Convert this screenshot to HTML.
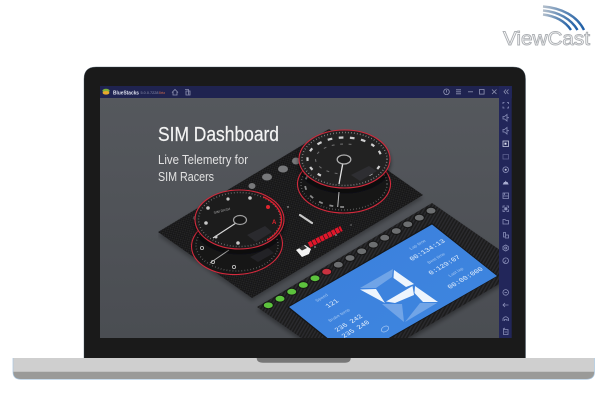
<!DOCTYPE html>
<html><head><meta charset="utf-8"><style>
html,body{margin:0;padding:0;background:#fff;width:602px;height:414px;overflow:hidden}
svg{display:block;position:absolute;left:0;top:0}
text{font-family:"Liberation Sans",sans-serif}
</style></head><body>
<svg width="602" height="414" viewBox="0 0 602 414" xmlns="http://www.w3.org/2000/svg">
<defs>
<linearGradient id="bg" x1="0" y1="0" x2="0" y2="1"><stop offset="0" stop-color="#55585d"/><stop offset="1" stop-color="#4a4d52"/></linearGradient>
<linearGradient id="arc" x1="0" y1="0" x2="1" y2="0"><stop offset="0" stop-color="#b5c0cc"/><stop offset=".55" stop-color="#5d87b5"/><stop offset="1" stop-color="#1e5ea6"/></linearGradient>
<linearGradient id="blue" x1="0" y1="0" x2="1" y2="1"><stop offset="0" stop-color="#3a80dc"/><stop offset="1" stop-color="#3f86e0"/></linearGradient>
<pattern id="carbon" width="3" height="3" patternUnits="userSpaceOnUse" patternTransform="rotate(-30)"><rect width="3" height="3" fill="#161617"/><rect width="1.5" height="1.5" fill="#262628"/><rect x="1.5" y="1.5" width="1.5" height="1.5" fill="#202022"/></pattern>
<pattern id="stripe" width="3" height="3" patternUnits="userSpaceOnUse" patternTransform="rotate(30)"><rect width="3" height="3" fill="#1c1c1e"/><rect width="1.4" height="3" fill="#2c2c2e"/></pattern>
<clipPath id="content"><rect x="100" y="98" width="399" height="240"/></clipPath>
<filter id="blur" x="-30%" y="-30%" width="160%" height="160%"><feGaussianBlur stdDeviation="2"/></filter>
<filter id="soft" x="0" y="0" width="100%" height="100%"><feGaussianBlur stdDeviation=".35"/></filter>
</defs>

<!-- ViewCast logo -->
<g fill="none" stroke="url(#arc)" stroke-width="2.400">
<path d="M543 6.500C562 8 577 16 584 30"/>
<path d="M543 10.500C559 12 571 19 577.500 30"/>
<path d="M543 14.500C555 16 565 21 571 30"/>
</g>
<text x="503" y="45" font-size="19" fill="#fff" stroke="#aeb1b5" stroke-width=".9" textLength="87" lengthAdjust="spacingAndGlyphs">ViewCast</text>

<!-- laptop body -->
<path d="M84 358V79Q84 67 96 67H513Q525.500 67 525.500 79V358Z" fill="#1a1a1a"/>
<path d="M84 358V79Q84 67 96 67H513Q525.500 67 525.500 79V358" fill="none" stroke="#3a5060" stroke-width=".5" opacity=".7"/>

<!-- base -->
<path d="M13 358H594.500V372Q594.500 379.300 586 379.300H21Q13 379.300 13 372Z" fill="#cfcfcf"/>
<path d="M13 371.700H594.500V372Q594.500 379.300 586 379.300H21Q13 379.300 13 372Z" fill="#9a9a98"/>
<path d="M13 358V372Q13 379.300 21 379.300H586Q594.500 379.300 594.500 372V358" fill="none" stroke="#a9c6e0" stroke-width=".7"/>
<path d="M256.700 358H350.700Q350.700 362.700 345 362.700H263Q256.700 362.700 256.700 358Z" fill="#777"/>

<!-- window -->
<rect x="100" y="86" width="412" height="12.300" fill="#1f2350"/>
<rect x="499" y="86" width="12.700" height="252" fill="#22265a"/>
<rect x="100" y="98" width="399" height="240" fill="url(#bg)"/>

<g clip-path="url(#content)">
<g filter="url(#soft)">
<!-- carbon panel -->
<polygon points="158,232 329,129 423,195 252,298" fill="#000" opacity=".3" filter="url(#blur)" transform="translate(0,3)"/>
<polygon points="158,232 329,129 423,195 252,298" fill="url(#carbon)"/>

<!-- gray leds on carbon -->
<g fill="#77787a">
<ellipse cx="196" cy="218" rx="3" ry="2.500" opacity=".6"/>
<ellipse cx="252" cy="186" rx="3.500" ry="3"/>
<ellipse cx="267" cy="177" rx="5" ry="3.500"/>
<ellipse cx="283" cy="169" rx="5" ry="3.500"/>
<ellipse cx="296" cy="161" rx="4" ry="3.500"/>
</g>

<!-- left gauges -->
<g>
<ellipse cx="237" cy="245" rx="45.500" ry="29.500" fill="#131314" stroke="#d32a3c" stroke-width="1.100" transform="rotate(-3 237 245)"/>
<ellipse cx="237" cy="245" rx="41" ry="26" fill="none" stroke="#777" stroke-width="1.500" stroke-dasharray=".6 2.400"/>
<line x1="229" y1="250" x2="210" y2="263" stroke="#aaa" stroke-width="1"/>
<g fill="none" stroke="#bbb" stroke-width=".9"><circle cx="202" cy="248" r="1.600"/><circle cx="213" cy="262" r="1.600"/><circle cx="234" cy="267" r="1.600"/></g>
<polygon points="250,257 268,248 274,253 258,262" fill="#242426"/>
<ellipse cx="239.500" cy="219.500" rx="45" ry="29.500" fill="#000" opacity=".55" filter="url(#blur)" transform="translate(0,3)"/>
<ellipse cx="239.500" cy="219.500" rx="44.500" ry="29.500" fill="#1c1c1d" stroke="#d32a3c" stroke-width="1.100"/>
<ellipse cx="239.500" cy="219.500" rx="41" ry="27" fill="none" stroke="#8c8c8c" stroke-width="1.500" stroke-dasharray=".6 2.400"/>
<ellipse cx="239.500" cy="219.500" rx="42" ry="27.500" fill="none" stroke="#e01b2c" stroke-width="1.400" pathLength="100" stroke-dasharray="12 74 14 0" />
<polygon points="247,235 265,226 272,232 256,242" fill="#2b2b2d"/>
<line x1="236" y1="223" x2="213" y2="238" stroke="#d8d8d8" stroke-width="1.200"/>
<ellipse cx="240" cy="220" rx="6.500" ry="4.500" fill="#161616" stroke="#a0a0a0" stroke-width="1.200"/>
<g fill="#c8c8c8"><circle cx="228" cy="199" r="1.600"/><circle cx="250" cy="198" r="1.800"/><circle cx="208" cy="208" r="1.800"/><circle cx="206" cy="223" r="1.800"/><circle cx="216" cy="237" r="1.500"/><circle cx="238" cy="243" r="1.800"/></g>
<circle cx="268" cy="207" r="2" fill="#e0252f"/>
<text x="272" y="224" font-size="6" fill="#e0252f" font-weight="bold">A</text>
<text x="214" y="214" font-size="3.500" fill="#aaa" transform="rotate(-14 214 214)">SIM DASH</text>
</g>

<!-- right gauges -->
<g>
<ellipse cx="344" cy="184" rx="46.500" ry="29" fill="#131314" stroke="#d32a3c" stroke-width="1.100"/>
<ellipse cx="344" cy="184" rx="39" ry="23" fill="none" stroke="#8a8a8a" stroke-width="1.800" pathLength="100" stroke-dasharray="0 25 2 3.500 2 3.500 2 3.500 2 3.500 2 3.500 2 3.500 2 3.500 2 41"/>
<ellipse cx="344" cy="184" rx="43" ry="26" fill="none" stroke="#777" stroke-width="1.500" stroke-dasharray=".6 2.400"/>
<line x1="339" y1="192" x2="337.700" y2="207" stroke="#c0c0c0" stroke-width="1"/>
<ellipse cx="344.500" cy="159" rx="46" ry="29" fill="#000" opacity=".55" filter="url(#blur)" transform="translate(0,3)"/>
<ellipse cx="344.500" cy="159" rx="45.500" ry="29" fill="#222224" stroke="#d32a3c" stroke-width="1.100"/>
<ellipse cx="344.500" cy="159" rx="42.500" ry="26.500" fill="none" stroke="#999" stroke-width="1.500" stroke-dasharray=".7 2.300"/>
<ellipse cx="344.500" cy="159" rx="37" ry="21.500" fill="none" stroke="#cfcfcf" stroke-width="2.200" pathLength="100" stroke-dasharray="0 4 2 3.500 2 3.500 0 23 2 3.500 2 3.500 2 3.500 2 3.500 2.500 3.500 2.500 3.500 2.500 3.500 2.500 3.500 2.500 3.500 2 3.500 2 3.500 2 3.500"/>
<ellipse cx="344.500" cy="159" rx="29" ry="15" fill="none" stroke="#6c6c6c" stroke-width="1.100" pathLength="100" stroke-dasharray="0 30 2 4 2 4 2 4 2 4 2 4 2 4 2 4 2 4 2 20"/>
<polygon points="351,175 369,166 377,171 360,181" fill="#2e2e30"/>
<line x1="342.700" y1="164" x2="339" y2="184" stroke="#e2e2e2" stroke-width="1.300"/>
<ellipse cx="344" cy="159.500" rx="6.800" ry="4.500" fill="#1a1a1a" stroke="#b0b0b0" stroke-width="1.300"/>
</g>

<!-- pill, fuel, bar -->
<line x1="300" y1="215" x2="312" y2="223" stroke="#c9c9c9" stroke-width="2.200" stroke-linecap="round"/>
<line x1="309" y1="245" x2="341.500" y2="228.500" stroke="#e0182a" stroke-width="5.500" stroke-dasharray="3.600 .7"/>
<polygon points="296,250 305,245 311,249 309,254 302,257" fill="#f2f2f2"/>
<polygon points="299,248 304,245.500 307,248 302,250.500" fill="#333"/>
<circle cx="315" cy="247" r="1" fill="#777"/><circle cx="336" cy="235" r="1" fill="#777"/>
<circle cx="351" cy="225" r=".6" fill="#aaa"/>
<circle cx="288" cy="207" r=".7" fill="#ccc"/>

<!-- dashboard -->
<polygon points="257,307 432,203 526,268 350,372" fill="#000" opacity=".35" filter="url(#blur)" transform="translate(0,3)"/>
<polygon points="257,307 432,203 526,268 350,372" fill="url(#stripe)"/>
<polygon points="287,307 432,223 498,276 353,360" fill="#121316"/>
<polygon points="289,307 432,224.500 497,276 353,358.500" fill="url(#blue)"/>

<!-- leds -->
<g>
<g fill="#5cc23e" stroke="#141414" stroke-width="1">
<ellipse cx="268.300" cy="305.300" rx="5" ry="3.400"/>
<ellipse cx="280" cy="298.700" rx="5" ry="3.400"/>
<ellipse cx="291.700" cy="291.700" rx="5" ry="3.400"/>
<ellipse cx="303.300" cy="285" rx="5" ry="3.400"/>
<ellipse cx="315" cy="278.300" rx="5" ry="3.400"/>
</g>
<ellipse cx="326.700" cy="271.700" rx="5" ry="3.400" fill="#c9333f" stroke="#141414" stroke-width="1"/>
<g fill="#6c6e70" stroke="#141414" stroke-width="1">
<ellipse cx="338.300" cy="264.700" rx="5" ry="3.400"/>
<ellipse cx="350" cy="258" rx="5" ry="3.400"/>
<ellipse cx="361.700" cy="251.300" rx="5" ry="3.400"/>
<ellipse cx="373.300" cy="244.700" rx="5" ry="3.400"/>
<ellipse cx="384.700" cy="237.700" rx="5" ry="3.400"/>
<ellipse cx="396.300" cy="231" rx="5" ry="3.400"/>
<ellipse cx="407.700" cy="224.300" rx="5" ry="3.400"/>
<ellipse cx="419.300" cy="217.700" rx="5" ry="3.400"/>
<ellipse cx="431" cy="210.700" rx="5" ry="3.400"/>
</g>
</g>

<!-- big digit -->
<g fill="#8db7ec" opacity=".65">
<polygon points="360,288 393,269 392,277 376,288"/>
<polygon points="382,304 402,304 404,322"/>
<polygon points="405,322 420,303 437,303"/>
</g>
<g fill="#eef5fd">
<polygon points="394,270 414,284 406,287 393.500,278"/>
<polygon points="412.500,286 414,295 395,303 386,301.500"/>
<polygon points="415,286 438,302 423,302 414.500,293"/>
<polygon points="360,289.500 376,289 385,303"/>
</g>

<!-- display text -->
<g fill="#a8c9f2" font-size="4.600">
<text transform="matrix(.866 -.5 .72 .62 411 250)">Lap time</text>
<text transform="matrix(.866 -.5 .72 .62 429 264)">Best time</text>
<text transform="matrix(.866 -.5 .72 .62 450 277)">Last lap</text>
<text transform="matrix(.866 -.5 .72 .62 317 302)">Speed</text>
<text transform="matrix(.866 -.5 .72 .62 330 322)">Brake temp</text>
</g>
<g fill="#eaf3fd" font-size="7.200">
<text transform="matrix(.866 -.5 .72 .62 412 261)" style="font-family:'Liberation Mono',monospace">00:134:13</text>
<text transform="matrix(.866 -.5 .72 .62 431 275)" style="font-family:'Liberation Mono',monospace">0:129:07</text>
<text transform="matrix(.866 -.5 .72 .62 450 289)" style="font-family:'Liberation Mono',monospace">00:00:000</text>
<text transform="matrix(.866 -.5 .72 .62 328 308)" style="font-family:'Liberation Mono',monospace">121</text>
<text transform="matrix(.866 -.5 .72 .62 337 332)" style="font-family:'Liberation Mono',monospace">236 242</text>
<text transform="matrix(.866 -.5 .72 .62 344 338)" style="font-family:'Liberation Mono',monospace">235 240</text>
</g>
<ellipse cx="385" cy="329" rx="4" ry="2.600" fill="none" stroke="#a8c9f2" stroke-width=".7" transform="rotate(-30 385 329)"/>
</g>
</g>

<!-- headings -->
<text x="158" y="141" font-size="20" fill="#f4f4f4" stroke="#f4f4f4" stroke-width=".2" textLength="121" lengthAdjust="spacingAndGlyphs">SIM Dashboard</text>
<text x="158" y="164" font-size="13" fill="#e2e2e2" textLength="90" lengthAdjust="spacingAndGlyphs">Live Telemetry for</text>
<text x="158" y="181" font-size="13" fill="#e2e2e2" textLength="56" lengthAdjust="spacingAndGlyphs">SIM Racers</text>

<!-- title bar -->
<ellipse cx="106" cy="90.800" rx="3.600" ry="2" fill="#7fb13a"/>
<ellipse cx="106" cy="92.800" rx="3.400" ry="1.800" fill="#e8a92c"/>
<text x="113" y="94.300" font-size="5.800" font-weight="bold" fill="#dfe2ef" textLength="26" lengthAdjust="spacingAndGlyphs">BlueStacks</text>
<text x="140.500" y="94" font-size="3.600" fill="#8e92ad" textLength="18" lengthAdjust="spacingAndGlyphs">5.0.0.7228</text>
<text x="159" y="94" font-size="3.600" fill="#c8664a" textLength="6" lengthAdjust="spacingAndGlyphs">Beta</text>
<g fill="none" stroke="#8f93b2" stroke-width=".8">
<path d="M172 92.500L175 89.500L178 92.500M173 92V95H177V92"/>
<path d="M185 89.500H188.500V94.500M186 91H190V95H186Z"/>
<circle cx="446.500" cy="91.800" r="2.800"/><path d="M446.500 90V92.500"/>
<path d="M456 89.800H461M456 91.800H461M456 93.800H461"/>
<path d="M468 91.800H473"/>
<rect x="479.500" y="89.500" width="4.600" height="4.600"/>
<path d="M492 89.500L496.500 94M496.500 89.500L492 94"/>
<path d="M506 89.500L504 91.800L506 94M508.500 89.500L506.500 91.800L508.500 94"/>
</g>

<!-- sidebar icons -->
<g fill="none" stroke="#8a8fb8" stroke-width=".8">
<path d="M503 104V102.500H504.500M507 102.500H508.500V104M508.500 106.500V108H507M504.500 108H503V106.500" />
<path d="M503 116.500H504.500L507 114.500V121L504.500 119H503ZM507.500 117.700H509"/>
<path d="M503 129.500H504.500L507 127.500V134L504.500 132H503ZM507.500 130.700H509"/>
<rect x="503" y="141" width="5.500" height="5.500" stroke="#c6cae0"/><rect x="504.500" y="142.700" width="2" height="2" fill="#dfe2ef" stroke="none"/>
<rect x="503" y="154.500" width="5.500" height="4.500" stroke="#5d6190"/>
<circle cx="505.700" cy="169.700" r="2.800"/><circle cx="505.700" cy="169.700" r="1" fill="#c6cae0" stroke="none"/>
<path d="M502.700 184.500H508.700L507.500 182H506.500L505.700 180.500L505 182H504Z" fill="#a8acd0" stroke="none"/>
<path d="M503 193H508.500V198.500H503ZM503 196H508.500M504.500 193V195"/>
<path d="M503 208V206H505M506.500 206H508.500V208M508.500 209.500V211.500H506.500M505 211.500H503V209.500"/><rect x="504.300" y="207.300" width="3" height="3" fill="#8a8fb8" stroke="none"/>
<path d="M503 219.500H505L506 220.500H508.500V224H503Z"/>
<path d="M503.500 232.500H505.500V237H503.500ZM505.500 235H508.500V238H505"/>
<path d="M505.700 245L508.300 246.500V249.500L505.700 251L503 249.500V246.500Z"/><circle cx="505.700" cy="248" r="1"/>
<circle cx="505.700" cy="260.700" r="2.800"/><path d="M504.500 262.500L506 260.300"/>
<circle cx="505.700" cy="292.400" r="2.800"/><path d="M504.500 292.400H507"/>
<path d="M508.500 305H503M505 303L503 305L505 307"/>
<path d="M503 321V318.500Q505.700 315 508.500 318.500V321M504.500 321V319.500H507V321"/>
<path d="M503.500 329.500H508V334.500H503.500ZM503 329L505 328M504.500 332H507"/>
</g>
</svg>
</body></html>
